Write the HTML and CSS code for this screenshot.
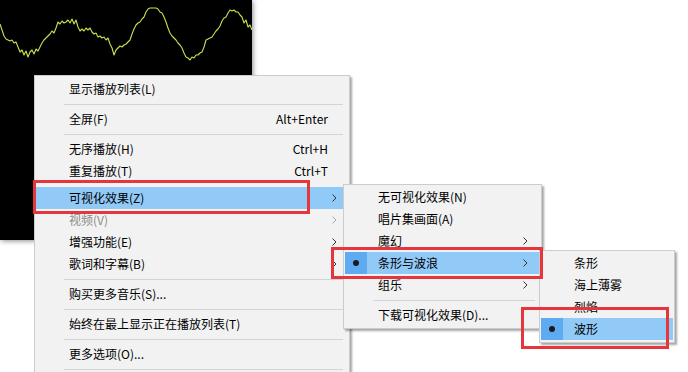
FILE: index.html
```html
<!DOCTYPE html>
<html lang="zh-CN">
<head>
  <meta charset="UTF-8" />
  <meta name="viewport" content="width=device-width, initial-scale=1.0" />
  <title>可视化效果菜单</title>
  <link rel="stylesheet" href="styles.css">
</head>
<body>
  <div class="desktop">

    <div class="viz">
      <svg width="252" height="240" viewBox="0 0 252 240">
        <polyline class="wave" points="0,24 2,30 4,36 6,39 8,40 10,41 12,40 14,43 16,42 18,47 20,52 22,50 24,55 26,51 28,57 30,52 32,50 34,54 36,49 38,51 40,47 42,43 44,40 46,38 48,36 50,34 52,31 54,33 56,28 58,22 60,24 62,21 64,23 66,22 68,20 70,23 72,19 74,24 76,20 78,27 80,31 82,29 84,31 86,28 88,30 90,28 92,32 94,34 96,33 98,37 100,36 102,38 104,37 106,40 108,38 110,44 112,48 114,55 116,50 118,48 120,46 122,47 124,45 126,44 128,42 130,40 132,34 134,29 136,25 138,23 140,22 142,19 144,17 146,12 148,9 150,8 152,8 154,8 156,8 158,9 160,12 162,13 164,17 166,22 168,28 170,33 172,36 174,38 176,40 178,43 180,45 182,48 184,53 186,57 188,58 190,60 192,57 194,58 196,55 198,55 200,53 202,52 204,47 206,40 208,39 210,38 212,37 214,34 216,31 218,29 220,26 222,21 224,18 226,17 228,13 230,10 232,11 234,10 236,12 238,12 240,15 242,17 244,23 246,20 248,27 250,25 252,30" />
      </svg>
    </div>

    <!-- main context menu -->
    <div class="menu menu-main">
      <div class="item"><span class="check"></span><span class="label">显示播放列表(L)</span></div>
      <div class="sep"></div>
      <div class="item"><span class="check"></span><span class="label">全屏(F)</span><span class="key">Alt+Enter</span></div>
      <div class="sep"></div>
      <div class="item"><span class="check"></span><span class="label">无序播放(H)</span><span class="key">Ctrl+H</span></div>
      <div class="item"><span class="check"></span><span class="label">重复播放(T)</span><span class="key">Ctrl+T</span></div>
      <div class="item item-gap active"><span class="check"></span><span class="label">可视化效果(Z)</span><span class="arrow"><svg width="5" height="8" viewBox="0 0 5 8"><path d="M0.5 0.5 L4 4 L0.5 7.5" /></svg></span></div>
      <div class="item disabled"><span class="check"></span><span class="label">视频(V)</span><span class="arrow"><svg width="5" height="8" viewBox="0 0 5 8"><path d="M0.5 0.5 L4 4 L0.5 7.5" /></svg></span></div>
      <div class="item"><span class="check"></span><span class="label">增强功能(E)</span><span class="arrow"><svg width="5" height="8" viewBox="0 0 5 8"><path d="M0.5 0.5 L4 4 L0.5 7.5" /></svg></span></div>
      <div class="item"><span class="check"></span><span class="label">歌词和字幕(B)</span><span class="arrow"><svg width="5" height="8" viewBox="0 0 5 8"><path d="M0.5 0.5 L4 4 L0.5 7.5" /></svg></span></div>
      <div class="sep"></div>
      <div class="item"><span class="check"></span><span class="label">购买更多音乐(S)...</span></div>
      <div class="sep"></div>
      <div class="item"><span class="check"></span><span class="label">始终在最上显示正在播放列表(T)</span></div>
      <div class="sep"></div>
      <div class="item"><span class="check"></span><span class="label">更多选项(O)...</span></div>
      <div class="sep"></div>
    </div>

    <!-- visualizations submenu -->
    <div class="menu menu-viz">
      <div class="item"><span class="check"></span><span class="label">无可视化效果(N)</span></div>
      <div class="item"><span class="check"></span><span class="label">唱片集画面(A)</span></div>
      <div class="item"><span class="check"></span><span class="label">魔幻</span><span class="arrow"><svg width="5" height="8" viewBox="0 0 5 8"><path d="M0.5 0.5 L4 4 L0.5 7.5" /></svg></span></div>
      <div class="item active"><span class="check"><span class="dot"></span></span><span class="label">条形与波浪</span><span class="arrow"><svg width="5" height="8" viewBox="0 0 5 8"><path d="M0.5 0.5 L4 4 L0.5 7.5" /></svg></span></div>
      <div class="item"><span class="check"></span><span class="label">组乐</span><span class="arrow"><svg width="5" height="8" viewBox="0 0 5 8"><path d="M0.5 0.5 L4 4 L0.5 7.5" /></svg></span></div>
      <div class="sep"></div>
      <div class="item"><span class="check"></span><span class="label">下载可视化效果(D)...</span></div>
    </div>

    <!-- bars and waves submenu -->
    <div class="menu menu-bars">
      <div class="item"><span class="check"></span><span class="label">条形</span></div>
      <div class="item"><span class="check"></span><span class="label">海上薄雾</span></div>
      <div class="item"><span class="check"></span><span class="label">烈焰</span></div>
      <div class="item active"><span class="check"><span class="dot"></span></span><span class="label">波形</span></div>
    </div>

    <div class="mark mark-1"></div>
    <div class="mark mark-2"></div>
    <div class="mark mark-3"></div>

  </div>
</body>
</html>
```

FILE: styles.css
```css
body {
  margin: 0;
  background: #fff;
  font-family: "Noto Sans CJK SC", "Microsoft YaHei", sans-serif;
  font-size: 12px;
  color: #000;
}

.desktop {
  position: relative;
  width: 688px;
  height: 372px;
  overflow: hidden;
  background: #fff;
}

.viz {
  position: absolute;
  left: 0;
  top: 0;
  width: 252px;
  height: 240px;
  background: #000;
  box-shadow: 1px 1px 5px rgba(0, 0, 0, 0.45);
}

.viz svg {
  display: block;
}

.wave {
  fill: none;
  stroke: #c8e24e;
  stroke-width: 1.1;
  stroke-linejoin: round;
}

.menu {
  position: absolute;
  box-sizing: border-box;
  background: #f2f2f2;
  border: 1px solid #cccccc;
  padding: 1px;
  box-shadow: 2px 2px 2px rgba(0, 0, 0, 0.35);
  display: flex;
  flex-direction: column;
}

.menu-main {
  left: 34px;
  top: 75px;
  width: 316px;
  height: 320px;
  padding-top: 2px;
}

.menu-viz {
  left: 343px;
  top: 184px;
  width: 199px;
  padding-bottom: 2px;
}

.menu-bars {
  left: 539px;
  top: 250px;
  width: 136px;
  padding-bottom: 2px;
}

.item {
  display: flex;
  align-items: center;
  height: 22px;
  line-height: 22px;
  white-space: nowrap;
}

.item-gap {
  margin-top: 5px;
}

.item .check {
  flex: 0 0 22px;
  height: 22px;
  display: flex;
  align-items: center;
  justify-content: center;
}

.item .label {
  flex: 1;
  padding-left: 11px;
}

.item .key {
  padding-right: 20px;
}

.item .arrow {
  flex: 0 0 auto;
  display: flex;
  align-items: center;
  padding-right: 12px;
}

.menu-main .item .arrow {
  padding-right: 11px;
}

.arrow svg path {
  fill: none;
  stroke: #333;
  stroke-width: 1;
}

.item.active {
  background: #91c9f7;
}

.item.active .check {
  background: #5fabf1;
}

.menu-main .item.active .check {
  background: none;
}

.dot {
  width: 6px;
  height: 6px;
  border-radius: 50%;
  background: #1b1b1b;
}

.item.disabled {
  color: #8c8c8c;
}

.item.disabled .arrow svg path {
  stroke: #a8a8a8;
}

.sep {
  height: 8px;
  display: flex;
  align-items: center;
  padding-left: 28px;
  padding-right: 5px;
}

.sep::after {
  content: "";
  flex: 1;
  height: 1px;
  background: #d4d4d4;
}

.mark {
  position: absolute;
  box-sizing: border-box;
  border: 3px solid #e5363d;
}

.mark-1 {
  left: 33px;
  top: 180px;
  width: 277px;
  height: 34px;
}

.mark-2 {
  left: 331px;
  top: 247px;
  width: 212px;
  height: 32px;
}

.mark-3 {
  left: 521px;
  top: 307px;
  width: 148px;
  height: 42px;
}
```
